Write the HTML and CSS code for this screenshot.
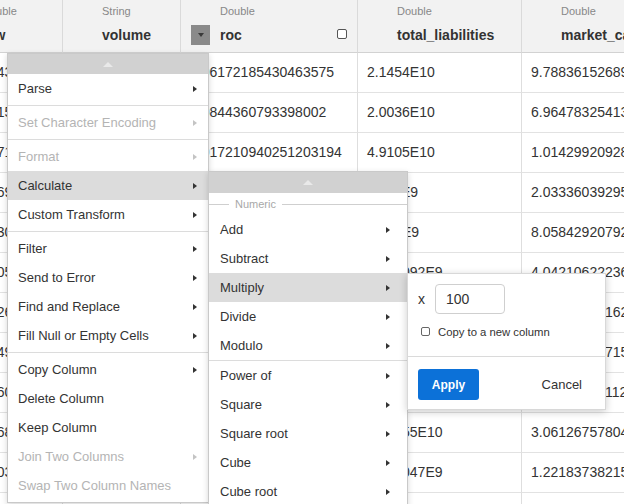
FILE: index.html
```html
<!DOCTYPE html>
<html>
<head>
<meta charset="utf-8">
<link rel="stylesheet" href="styles.css">
</head>
<body>
<div class="sheet">
  <div class="row hdr">
    <div class="hcell"><span class="slot"></span><div class="labels"><span class="type">Double</span><span class="name">low</span></div></div>
    <div class="hcell"><span class="slot"></span><div class="labels"><span class="type">String</span><span class="name">volume</span></div></div>
    <div class="hcell"><span class="slot"><span class="dd-btn"></span></span><div class="labels"><span class="type">Double</span><span class="name">roc</span></div><input type="checkbox" class="hcheck"></div>
    <div class="hcell"><span class="slot"></span><div class="labels"><span class="type">Double</span><span class="name">total_liabilities</span></div></div>
    <div class="hcell"><span class="slot"></span><div class="labels"><span class="type">Double</span><span class="name">market_cap</span></div></div>
  </div>
  <div class="row"><div class="cell first">5.8917431</div><div class="cell">125983000</div><div class="cell">0.06172185430463575</div><div class="cell">2.1454E10</div><div class="cell">9.788361526896E10</div></div>
  <div class="row"><div class="cell first">5.7302158</div><div class="cell">98231400</div><div class="cell">0.0844360793398002</div><div class="cell">2.0036E10</div><div class="cell">6.964783254131E10</div></div>
  <div class="row"><div class="cell first">5.9124713</div><div class="cell">113500200</div><div class="cell">0.017210940251203194</div><div class="cell">4.9105E10</div><div class="cell">1.014299209286E11</div></div>
  <div class="row"><div class="cell first">6.0218694</div><div class="cell">87420100</div><div class="cell">0.0531207704918033</div><div class="cell">3.711E9</div><div class="cell">2.033360392954E10</div></div>
  <div class="row"><div class="cell first">6.1547302</div><div class="cell">76120900</div><div class="cell">0.0274510338202</div><div class="cell">8.552E9</div><div class="cell">8.058429207921E9</div></div>
  <div class="row"><div class="cell first">5.9936054</div><div class="cell">102330500</div><div class="cell">0.0461090826451</div><div class="cell">2.409092E9</div><div class="cell">4.042106222364E10</div></div>
  <div class="row"><div class="cell first">6.2085261</div><div class="cell">94400100</div><div class="cell">0.0390118276303</div><div class="cell">1.2846E10</div><div class="cell">5.273948101625E9</div></div>
  <div class="row"><div class="cell first">6.3371495</div><div class="cell">88213000</div><div class="cell">0.0122093847716</div><div class="cell">5.703E9</div><div class="cell">7.128453907153E9</div></div>
  <div class="row"><div class="cell first">6.1892608</div><div class="cell">91550700</div><div class="cell">0.0689901324513</div><div class="cell">9.1182E9</div><div class="cell">1.982345701124E10</div></div>
  <div class="row"><div class="cell first">6.4417683</div><div class="cell">79004300</div><div class="cell">0.0257716033291</div><div class="cell">1.76355E10</div><div class="cell">3.061267578045E10</div></div>
  <div class="row"><div class="cell first">6.5209031</div><div class="cell">83111200</div><div class="cell">0.0414902177380</div><div class="cell">6.128047E9</div><div class="cell">1.221837382158E10</div></div>
  <div class="row"><div class="cell first">6.4852207</div><div class="cell">85020600</div><div class="cell">0.0331288810672</div><div class="cell">9.8214E9</div><div class="cell">2.501834567812E10</div></div>
</div>

<div class="menu main">
  <div class="scroll-up"><span class="up"></span></div>
  <div class="item"><span>Parse</span><span class="arrow"></span></div>
  <div class="sep"></div>
  <div class="item disabled"><span>Set Character Encoding</span><span class="arrow"></span></div>
  <div class="sep"></div>
  <div class="item disabled"><span>Format</span><span class="arrow"></span></div>
  <div class="item active"><span>Calculate</span><span class="arrow"></span></div>
  <div class="item"><span>Custom Transform</span><span class="arrow"></span></div>
  <div class="sep"></div>
  <div class="item"><span>Filter</span><span class="arrow"></span></div>
  <div class="item"><span>Send to Error</span><span class="arrow"></span></div>
  <div class="item"><span>Find and Replace</span><span class="arrow"></span></div>
  <div class="item"><span>Fill Null or Empty Cells</span><span class="arrow"></span></div>
  <div class="sep"></div>
  <div class="item"><span>Copy Column</span><span class="arrow"></span></div>
  <div class="item"><span>Delete Column</span></div>
  <div class="item"><span>Keep Column</span></div>
  <div class="item disabled"><span>Join Two Columns</span><span class="arrow"></span></div>
  <div class="item disabled"><span>Swap Two Column Names</span></div>
</div>

<div class="menu sub">
  <div class="scroll-up tall"><span class="up"></span></div>
  <div class="group"><span>Numeric</span></div>
  <div class="item"><span>Add</span><span class="arrow"></span></div>
  <div class="item"><span>Subtract</span><span class="arrow"></span></div>
  <div class="item active"><span>Multiply</span><span class="arrow"></span></div>
  <div class="item"><span>Divide</span><span class="arrow"></span></div>
  <div class="item"><span>Modulo</span><span class="arrow"></span></div>
  <div class="sep thin"></div>
  <div class="item"><span>Power of</span><span class="arrow"></span></div>
  <div class="item"><span>Square</span><span class="arrow"></span></div>
  <div class="item"><span>Square root</span><span class="arrow"></span></div>
  <div class="item"><span>Cube</span><span class="arrow"></span></div>
  <div class="item"><span>Cube root</span><span class="arrow"></span></div>
</div>

<div class="popup">
  <div class="form-row"><span class="x">x</span><input class="num" type="text" value="100"></div>
  <label class="check-row"><input type="checkbox" class="pcheck"><span>Copy to a new column</span></label>
  <div class="divider"></div>
  <div class="footer"><button class="apply">Apply</button><button class="cancel">Cancel</button></div>
</div>
</body>
</html>
```

FILE: styles.css
```css
html, body {
  margin: 0;
  padding: 0;
  overflow: hidden;
  background: #fff;
}
body {
  font-family: "Liberation Sans", Arial, sans-serif;
  color: #333;
  width: 624px;
  height: 504px;
  position: relative;
}
.sheet {
  margin-left: -57px;
  width: 779px;
}
.row {
  display: grid;
  grid-template-columns: 120px 118px 177px 164px 200px;
}
.hcell {
  box-sizing: border-box;
  height: 53px;
  background: #f2f2f2;
  border-right: 1px solid #dadada;
  border-bottom: 1px solid #d2d2d2;
  display: flex;
  align-items: flex-start;
  padding: 0 10px;
  overflow: hidden;
  white-space: nowrap;
}
.slot {
  flex: none;
  width: 19px;
  margin-right: 10px;
}
.dd-btn {
  display: flex;
  justify-content: center;
  align-items: center;
  margin-top: 25px;
  width: 19px;
  height: 20px;
  background: #8a8a8a;
}
.dd-btn::before {
  content: "";
  border-top: 4px solid #3a3a3a;
  border-left: 3.5px solid transparent;
  border-right: 3.5px solid transparent;
}
.labels {
  display: flex;
  flex-direction: column;
}
.type {
  font-size: 11px;
  line-height: 14px;
  margin-top: 4px;
  color: #888;
}
.name {
  font-size: 14px;
  font-weight: bold;
  line-height: 18px;
  margin-top: 8px;
  color: #333;
}
.hcheck {
  appearance: none;
  -webkit-appearance: none;
  margin: 29px 0 0 auto;
  width: 10px;
  height: 10px;
  border: 1px solid #555;
  border-radius: 2px;
  background: #fff;
  box-sizing: border-box;
}
.cell {
  box-sizing: border-box;
  height: 40px;
  line-height: 39px;
  padding-left: 9px;
  font-size: 14px;
  color: #333;
  border-right: 1px solid #dedede;
  border-bottom: 1px solid #e2e2e2;
  white-space: nowrap;
  overflow: hidden;
}
.cell.first {
  padding-left: 11px;
}

/* menus */
.menu {
  position: absolute;
  box-sizing: border-box;
  background: #fff;
  border: 1px solid #c9c9c9;
  box-shadow: 0 2px 6px rgba(0, 0, 0, 0.16);
  font-size: 13px;
}
.menu.main {
  left: 7px;
  top: 53px;
  width: 202px;
  padding-bottom: 2px;
}
.menu.sub {
  left: 208px;
  top: 171px;
  width: 200px;
  height: 345px;
}
.scroll-up {
  height: 20px;
  background: #d1d1d1;
  display: flex;
  justify-content: center;
  align-items: center;
}
.scroll-up.tall {
  height: 21px;
}
.up {
  border-bottom: 5px solid #e9e9e9;
  border-left: 5.5px solid transparent;
  border-right: 5.5px solid transparent;
}
.item {
  height: 29px;
  display: flex;
  align-items: center;
  justify-content: space-between;
  padding: 0 11px 0 10px;
  color: #333;
  white-space: nowrap;
}
.sub .item {
  padding: 0 17px 0 11px;
}
.item.disabled {
  color: #b4b4b4;
}
.item.active {
  background: #dcdcdc;
}
.arrow {
  width: 0;
  height: 0;
  border-left: 4px solid #333;
  border-top: 3.5px solid transparent;
  border-bottom: 3.5px solid transparent;
}
.item.disabled .arrow {
  border-left-color: #c4c4c4;
}
.sep {
  height: 1px;
  background: #dcdcdc;
  margin: 2px 0;
}
.sep.thin {
  margin: 0;
}
.group {
  height: 22px;
  display: flex;
  align-items: center;
  font-size: 11px;
  color: #a8a8a8;
}
.group::before {
  content: "";
  width: 20px;
  height: 1px;
  background: #cfcfcf;
}
.group::after {
  content: "";
  flex: 1;
  height: 1px;
  background: #cfcfcf;
}
.group span {
  margin: 0 6px;
}

/* popup */
.popup {
  position: absolute;
  left: 407px;
  top: 273px;
  width: 199px;
  height: 137px;
  box-sizing: border-box;
  background: #fff;
  border: 1px solid #d8d8d8;
  box-shadow: 0 2px 8px rgba(0, 0, 0, 0.2);
}
.form-row {
  display: flex;
  align-items: center;
  padding: 10px 10px 0 10px;
}
.x {
  font-size: 14px;
  color: #333;
}
.num {
  margin-left: 10px;
  width: 70px;
  height: 30px;
  box-sizing: border-box;
  border: 1px solid #cfcfcf;
  border-radius: 4px;
  padding: 0 0 0 10px;
  font-family: "Liberation Sans", Arial, sans-serif;
  font-size: 14px;
  color: #333;
  outline: none;
}
.check-row {
  display: flex;
  align-items: center;
  height: 9px;
  margin-top: 13px;
  padding-left: 13px;
  font-size: 11.3px;
  color: #333;
}
.pcheck {
  appearance: none;
  -webkit-appearance: none;
  margin: 0 8px 0 0;
  width: 9px;
  height: 9px;
  box-sizing: border-box;
  border: 1px solid #666;
  border-radius: 2px;
  background: #fff;
}
.divider {
  height: 1px;
  background: #dadada;
  margin-top: 20px;
}
.footer {
  display: flex;
  align-items: center;
  padding: 12px 0 0 10px;
}
.apply {
  width: 61px;
  height: 31px;
  border: none;
  border-radius: 3px;
  background: #0c71d8;
  color: #fff;
  font-family: "Liberation Sans", Arial, sans-serif;
  font-size: 12px;
  font-weight: bold;
  padding: 0;
}
.cancel {
  margin-left: auto;
  margin-right: 23px;
  border: none;
  background: none;
  padding: 0;
  font-family: "Liberation Sans", Arial, sans-serif;
  font-size: 13px;
  color: #333;
}
```
